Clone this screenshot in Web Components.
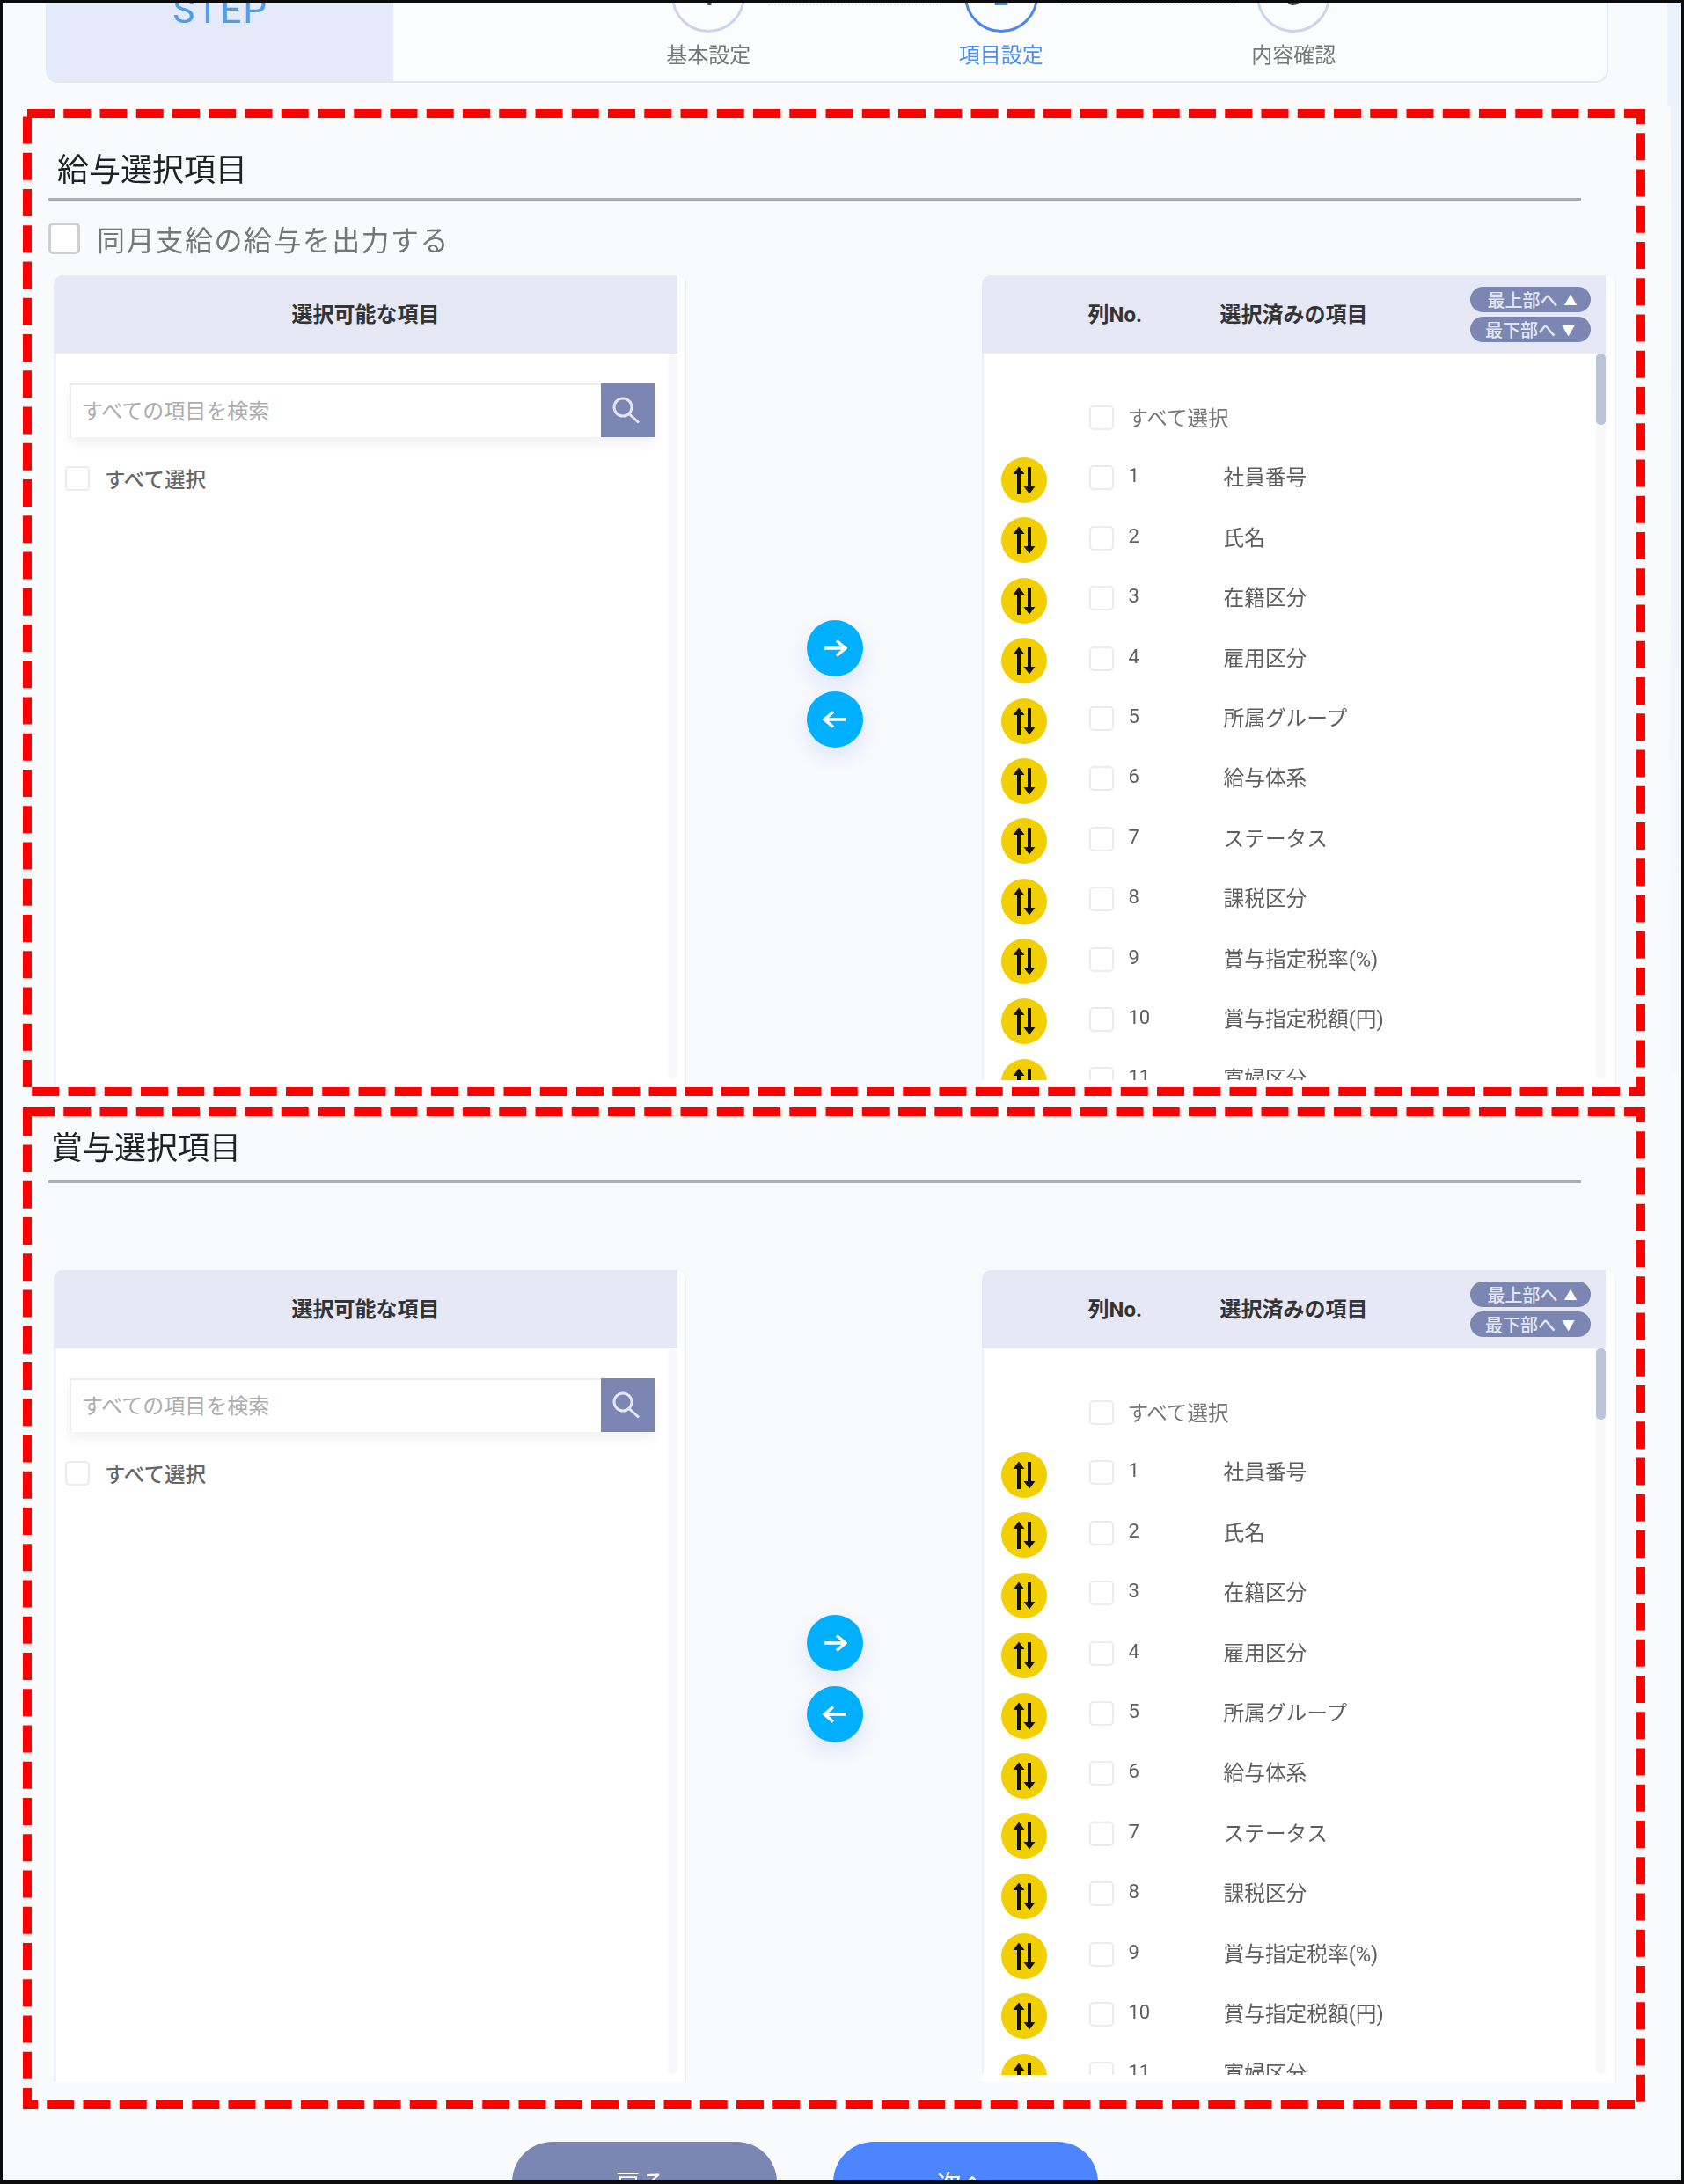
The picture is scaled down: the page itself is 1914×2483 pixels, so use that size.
<!DOCTYPE html>
<html lang="ja">
<head>
<meta charset="utf-8">
<title>項目設定</title>
<style>
  html, body { margin: 0; padding: 0; background: #f9fafc; }
  body { font-family: Roboto, "Noto Sans CJK JP", sans-serif; color: #333; }
</style>
</head>
<body>
<page-frame>
  <step-bar></step-bar>

  <select-section style="--title-left:39px;--title-top:44px;--rule-gap:5px;--box-height:1122px;margin-top:30px">
    <span slot="heading">給与選択項目</span>
    <option-row slot="option">同月支給の給与を出力する</option-row>
  </select-section>

  <select-section style="--title-left:32px;--title-top:21px;--rule-gap:10px;--box-height:1139px;--panel-gap:99px;margin-top:13px">
    <span slot="heading">賞与選択項目</span>
  </select-section>

  <nav-buttons></nav-buttons>
</page-frame>

<script>
class CheckBox extends HTMLElement {
    connectedCallback() {
        this.attachShadow({ mode: 'open' });
        this.shadowRoot.innerHTML = `
      <style>
        :host {
          display: block;
          flex: none;
          box-sizing: border-box;
          width: var(--check-size, 28px);
          height: var(--check-size, 28px);
          background: #fff;
          border: var(--check-border, 2px solid #ececee);
          border-radius: 5px;
        }
      </style>
    `;
    }
}
customElements.define('check-box', CheckBox);

class PageFrame extends HTMLElement {
    connectedCallback() {
        this.attachShadow({ mode: 'open' });
        this.shadowRoot.innerHTML = `
      <style>
        :host {
          display: block;
          position: relative;
          box-sizing: border-box;
          width: 1914px;
          height: 2483px;
          border: 3px solid #0c0c0c;
          border-bottom-width: 4px;
          overflow: hidden;
          background: #f9fafc;
        }
        .inner { filter: blur(0.7px); }
        .strip-top, .strip-low {
          position: absolute;
          right: 0;
        }
        .strip-top { top: 0; width: 16px; height: 117px; background: #eaf1fb; }
        .strip-low { top: 117px; width: 12px; height: 1100px; background: linear-gradient(#edf3fb, #f6f8fc); }
      </style>
      <div class="strip-top"></div>
      <div class="strip-low"></div>
      <div class="inner"><slot></slot></div>
    `;
    }
}
customElements.define('page-frame', PageFrame);

class StepBar extends HTMLElement {
    connectedCallback() {
        this.attachShadow({ mode: 'open' });
        const steps = [
            { no: 1, label: '基本設定' },
            { no: 2, label: '項目設定', on: true },
            { no: 3, label: '内容確認' },
        ];
        this.shadowRoot.innerHTML = `
      <style>
        :host {
          display: flex;
          box-sizing: border-box;
          width: 1776px;
          height: 154px;
          margin: -63px 0 0 49px;
          border: 2px solid #e1e8fa;
          border-radius: 0 0 14px 14px;
          background: #fbfcfe;
          overflow: hidden;
        }
        .head {
          width: 393px;
          padding-top: 50px;
          text-align: center;
          background: #e4eafa;
          color: #4a9cf5;
          font-size: 42px;
          line-height: 40px;
          letter-spacing: 2px;
        }
        .steps {
          display: flex;
          padding-left: 192px;
        }
        .step {
          position: relative;
          display: flex;
          flex-direction: column;
          align-items: center;
          width: 332.5px;
          padding-top: 11px;
        }
        .step:not(:last-child)::after {
          content: "";
          position: absolute;
          top: 62px;
          left: calc(50% + 68px);
          width: 197px;
          border-top: 2px dotted #e2e5ee;
        }
        .circle {
          display: flex;
          align-items: center;
          justify-content: center;
          box-sizing: border-box;
          width: 84px;
          height: 84px;
          border: 3px solid #ccd3ee;
          border-radius: 50%;
          font-size: 30px;
          font-weight: 700;
          color: #555;
        }
        .label {
          margin-top: 10px;
          font-size: 24px;
          line-height: 32px;
          color: #777;
        }
        .on .circle { border-color: #4a86f5; color: #3f8df2; }
        .on .label { color: #4c8df5; }
      </style>
      <div class="head">STEP</div>
      <div class="steps">
        ${steps.map(s => `
          <div class="step ${s.on ? 'on' : ''}">
            <div class="circle">${s.no}</div>
            <div class="label">${s.label}</div>
          </div>`).join('')}
      </div>
    `;
    }
}
customElements.define('step-bar', StepBar);

class OptionRow extends HTMLElement {
    connectedCallback() {
        this.attachShadow({ mode: 'open' });
        this.shadowRoot.innerHTML = `
      <style>
        :host {
          display: flex;
          align-items: center;
          height: 36px;
          margin: 25px 0 24px 29px;
          font-size: 32px;
          letter-spacing: 1.4px;
          color: #777;
        }
        check-box {
          --check-size: 36px;
          --check-border: 3px solid #cfcfcf;
          margin-right: 19px;
          background: #fff;
        }
      </style>
      <check-box></check-box>
      <slot></slot>
    `;
    }
}
customElements.define('option-row', OptionRow);

class MoveButton extends HTMLElement {
    connectedCallback() {
        this.attachShadow({ mode: 'open' });
        const d = this.getAttribute('dir') === 'left'
            ? 'M26 12H2 M12 3.5 L2 12 L12 20.5'
            : 'M2 12H26 M16 3.5 L26 12 L16 20.5';
        this.shadowRoot.innerHTML = `
      <style>
        :host {
          display: flex;
          align-items: center;
          justify-content: center;
          width: 64px;
          height: 64px;
          border-radius: 50%;
          background: #00b0ff;
          box-shadow: 0 10px 24px rgba(70, 110, 255, 0.16);
        }
        svg { width: 28px; height: 24px; }
      </style>
      <svg viewBox="0 0 28 24" fill="none" stroke="#fff" stroke-width="3.5">
        <path d="${d}"/>
      </svg>
    `;
    }
}
customElements.define('move-button', MoveButton);

class ScrollTrack extends HTMLElement {
    connectedCallback() {
        this.attachShadow({ mode: 'open' });
        this.shadowRoot.innerHTML = `
      <style>
        :host {
          display: block;
          flex: none;
          width: 11px;
          border-radius: 5px;
          background: #f8f8fa;
        }
        .thumb {
          height: var(--thumb, 0);
          border-radius: 5px;
          background: #bcc3d6;
        }
      </style>
      <div class="thumb"></div>
    `;
    }
}
customElements.define('scroll-track', ScrollTrack);

class AvailablePanel extends HTMLElement {
    connectedCallback() {
        this.attachShadow({ mode: 'open' });
        this.shadowRoot.innerHTML = `
      <style>
        :host {
          display: block;
          height: 923px;
          background: #fff;
          border-radius: 10px 10px 0 0;
          overflow: hidden;
          box-shadow: 1px 0 0 #eef0f8;
        }
        .head {
          display: flex;
          align-items: center;
          justify-content: center;
          box-sizing: border-box;
          width: 709px;
          height: 89px;
          padding-bottom: 4px;
          background: #e6e8f6;
          font-size: 24px;
          font-weight: 700;
          color: #333;
        }
        .body {
          display: flex;
          width: 709px;
          height: 834px;
          box-sizing: border-box;
          border-left: 3px solid #f0f1fa;
          background: #fff;
        }
        .main { flex: 1; padding: 33.5px 15px 0 0; overflow: hidden; }
        .search {
          display: flex;
          height: 61px;
          margin-left: 15px;
          box-sizing: border-box;
          box-shadow: 0 8px 12px rgba(0, 0, 0, 0.05);
        }
        .field {
          flex: 1;
          display: flex;
          align-items: center;
          padding: 0 0 4px 12px;
          border: solid #ececec;
          border-width: 2px 0 0 2px;
          font-size: 24px;
          color: #adadad;
        }
        .go { width: 61px; height: 61px; background: #7b86b2; }
        .go svg { display: block; width: 61px; height: 61px; }
        .all {
          display: flex;
          align-items: center;
          gap: 17px;
          height: 50px;
          margin: 22.5px 0 0 10px;
          font-size: 23.5px;
          font-weight: 500;
          color: #666;
        }
        scroll-track { height: 825px; }
      </style>
      <div class="head">選択可能な項目</div>
      <div class="body">
        <div class="main">
          <div class="search">
            <div class="field">すべての項目を検索</div>
            <div class="go">
              <svg viewBox="0 0 61 61" fill="none" stroke="#e3e6f3" stroke-width="3">
                <circle cx="25" cy="27" r="10"/>
                <path d="M32 34.5L43 44.5"/>
              </svg>
            </div>
          </div>
          <div class="all"><check-box></check-box><span>すべて選択</span></div>
        </div>
        <scroll-track></scroll-track>
      </div>
    `;
    }
}
customElements.define('available-panel', AvailablePanel);

class ListRow extends HTMLElement {
    connectedCallback() {
        this.attachShadow({ mode: 'open' });
        const no = this.getAttribute('no');
        const label = this.getAttribute('label');
        this.shadowRoot.innerHTML = `
      <style>
        :host {
          display: flex;
          align-items: center;
          box-sizing: border-box;
          height: 68.4px;
          padding-left: 20px;
          font-size: 23.7px;
          color: #5e5e5e;
        }
        .swap {
          flex: none;
          width: 52px;
          height: 52px;
          margin-right: 48px;
        }
        .swap svg { display: block; width: 52px; height: 52px; }
        check-box { margin-bottom: 5px; }
        .no {
          width: 108px;
          margin: 0 0 10px 17px;
          font-size: 22px;
          color: #5e5e5e;
        }
        .text { margin-bottom: 9px; }
        .all { margin: 0 0 8px 16px; font-size: 23.5px; color: #777; }
      </style>
      ${no ? `
        <div class="swap">
          <svg viewBox="0 0 52 52">
            <circle cx="26" cy="26" r="26" fill="#f2cf00"/>
            <path d="M20 17V42 M32 11V36" stroke="#111" stroke-width="4" fill="none"/>
            <path d="M13.5 19L20 10.5L26.5 19Z M25.5 33L32 41.5L38.5 33Z" fill="#111"/>
          </svg>
        </div>
        <check-box></check-box>
        <span class="no">${no}</span>
        <span class="text">${label}</span>` : `
        <div class="swap"></div>
        <check-box></check-box>
        <span class="all">${label}</span>`}
    `;
    }
}
customElements.define('list-row', ListRow);

class SelectedPanel extends HTMLElement {
    connectedCallback() {
        this.attachShadow({ mode: 'open' });
        const items = ['社員番号', '氏名', '在籍区分', '雇用区分', '所属グループ', '給与体系', 'ステータス',
            '課税区分', '賞与指定税率(%)', '賞与指定税額(円)', '寡婦区分'];
        this.shadowRoot.innerHTML = `
      <style>
        :host {
          display: block;
          height: 923px;
          background: #fff;
          border-radius: 10px 10px 0 0;
          overflow: hidden;
          box-shadow: 1px 0 0 #eef0f8;
        }
        .head {
          display: flex;
          align-items: center;
          box-sizing: border-box;
          width: 709.5px;
          height: 89px;
          padding-left: 121px;
          background: #e6e8f6;
          font-size: 24px;
          font-weight: 700;
          color: #333;
        }
        .col-no { width: 150px; margin-bottom: 4px; }
        .col-name { width: 284px; margin-bottom: 4px; }
        .jump { display: flex; flex-direction: column; gap: 5px; }
        .jump span {
          display: flex;
          align-items: center;
          justify-content: center;
          gap: 7px;
          width: 137px;
          height: 29px;
          border-radius: 15px;
          background: #7b86b2;
          color: #e3e6f4;
          font-size: 20px;
          font-weight: 500;
        }
        .jump span:first-child { box-sizing: border-box; padding-left: 5px; }
        .jump i { font-style: normal; font-size: 15px; color: #fff; }
        .body {
          display: flex;
          width: 709.5px;
          height: 826px;
          box-sizing: border-box;
          border-left: 2px solid #eef0fa;
          background: #fff;
        }
        .list { flex: 1; min-width: 0; padding-top: 41.4px; overflow: hidden; }
        scroll-track { --thumb: 81px; height: 825px; }
      </style>
      <div class="head">
        <div class="col-no">列No.</div>
        <div class="col-name">選択済みの項目</div>
        <div class="jump">
          <span>最上部へ<i>▲</i></span>
          <span>最下部へ<i>▼</i></span>
        </div>
      </div>
      <div class="body">
        <div class="list">
          <list-row label="すべて選択"></list-row>
          ${items.map((t, i) => `<list-row no="${i + 1}" label="${t}"></list-row>`).join('')}
        </div>
        <scroll-track></scroll-track>
      </div>
    `;
    }
}
customElements.define('selected-panel', SelectedPanel);

class SelectSection extends HTMLElement {
    connectedCallback() {
        this.attachShadow({ mode: 'open' });
        const height = parseInt(getComputedStyle(this).getPropertyValue('--box-height'));
        this.shadowRoot.innerHTML = `
      <style>
        :host {
          display: block;
          position: relative;
          box-sizing: border-box;
          width: 1844px;
          height: var(--box-height);
          margin-left: 23px;
          padding-top: var(--title-top);
        }
        .title {
          height: 52px;
          margin-left: var(--title-left);
          font-size: 36px;
          line-height: 52px;
          color: #222;
        }
        .rule {
          width: 1742px;
          height: 3px;
          margin: var(--rule-gap) 0 0 29px;
          background: #adadad;
        }
        .space { height: var(--panel-gap, auto); }
        .cols {
          display: grid;
          grid-template-columns: 718px 336.5px 720.5px;
          margin-left: 35px;
        }
        .move {
          display: flex;
          flex-direction: column;
          align-items: center;
          justify-content: center;
          gap: 17px;
          padding: 6px 0 0 3px;
        }
        svg.dash {
          position: absolute;
          inset: 0;
          width: 100%;
          height: 100%;
          pointer-events: none;
        }
      </style>
      <div class="title"><slot name="heading"></slot></div>
      <div class="rule"></div>
      <div class="space"><slot name="option"></slot></div>
      <div class="cols">
        <available-panel></available-panel>
        <div class="move">
          <move-button dir="right"></move-button>
          <move-button dir="left"></move-button>
        </div>
        <selected-panel></selected-panel>
      </div>
      <svg class="dash">
        <rect x="5" y="5" width="1834" height="${height - 10}" fill="none"
              stroke="#ff0000" stroke-width="10" stroke-dasharray="31 10.25"/>
      </svg>
    `;
    }
}
customElements.define('select-section', SelectSection);

class NavButtons extends HTMLElement {
    connectedCallback() {
        this.attachShadow({ mode: 'open' });
        this.shadowRoot.innerHTML = `
      <style>
        :host {
          display: flex;
          gap: 64px;
          margin: 37px 0 0 579px;
        }
        div {
          display: flex;
          align-items: center;
          justify-content: center;
          box-sizing: border-box;
          width: 301px;
          height: 92px;
          padding-right: 8px;
          border-radius: 46px;
          font-size: 28px;
          letter-spacing: 1px;
          color: #fff;
        }
        .back { background: #7b86b2; }
        .next { background: #4c85ff; }
      </style>
      <div class="back">戻る</div>
      <div class="next">次へ</div>
    `;
    }
}
customElements.define('nav-buttons', NavButtons);
</script>
</body>
</html>
